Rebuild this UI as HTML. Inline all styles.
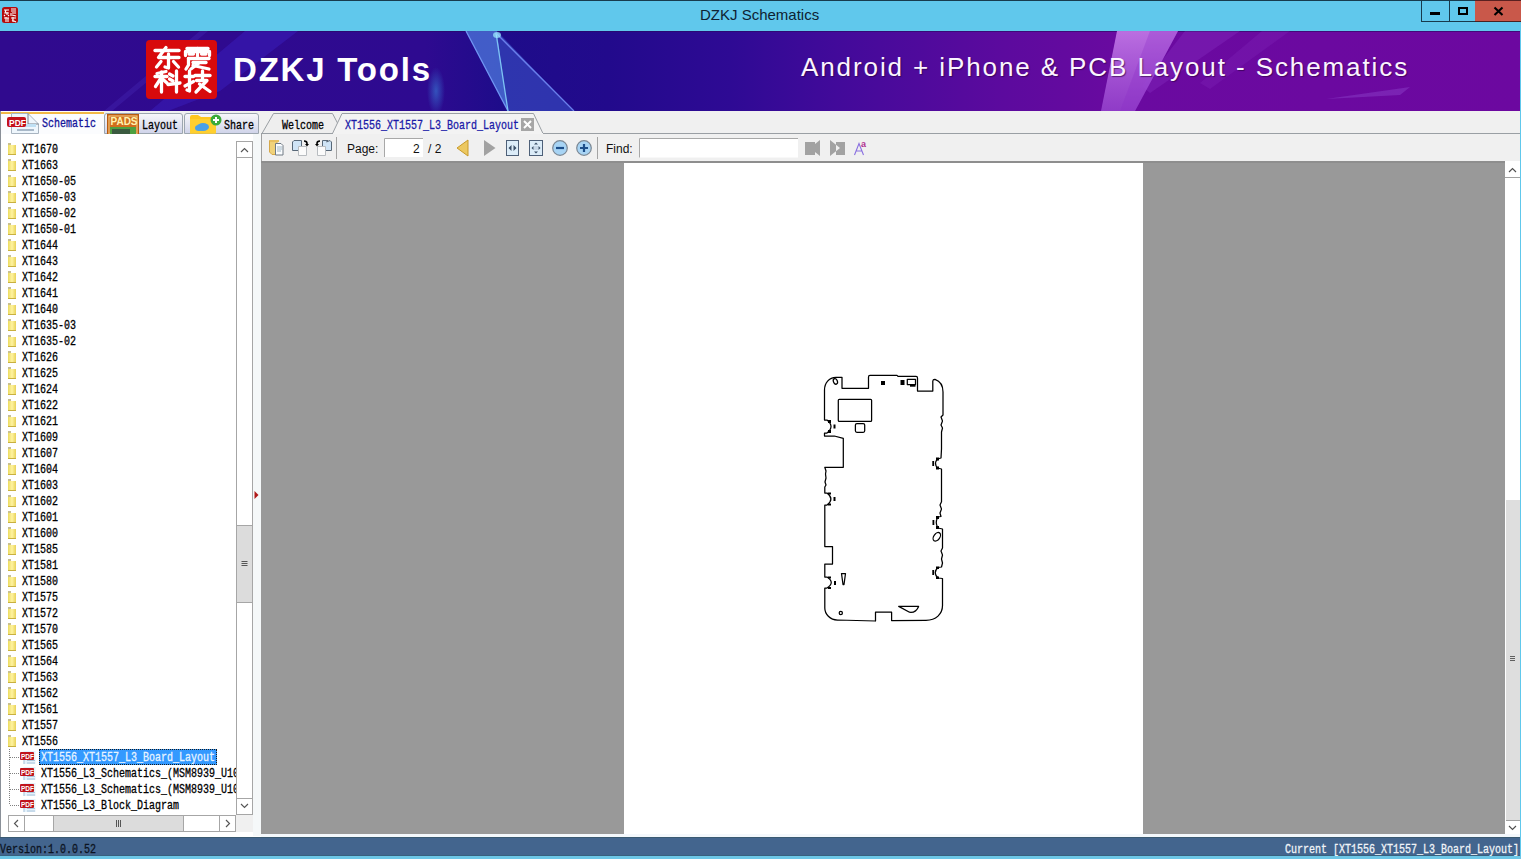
<!DOCTYPE html>
<html><head><meta charset="utf-8">
<style>
*{box-sizing:border-box;margin:0;padding:0}
html,body{width:1521px;height:859px;overflow:hidden;background:#f0f0f0;position:relative;font-family:"Liberation Sans",sans-serif}
.a{position:absolute}
.mono{font-family:"Liberation Mono",monospace;font-size:12.3px;line-height:14px;white-space:nowrap;transform-origin:0 0;transform:scaleX(0.813);-webkit-text-stroke:0.3px currentColor}
#title{left:0;top:0;width:1521px;height:31px;background:#60c8ec;border-top:1px solid #173c4e}
#ttext{left:700px;top:6px;font-size:15px;line-height:17px;color:#0e2233;white-space:nowrap}
.wb{top:0;height:22px;border:1px solid #183a4c;border-top:none}
#rb{left:1520px;top:0;width:1px;height:859px;background:#60c8ec}
#banner{left:0;top:31px;width:1520px;height:80px;overflow:hidden;background:linear-gradient(90deg,#2e0a8e 0%,#2c0b8c 30%,#1e0c88 34%,#2a0a90 45%,#3c0a98 53%,#5a0a9e 62%,#6a0aa0 75%,#6c08a0 100%)}
#tabs{left:0;top:111px;width:1520px;height:23px;background:#f0f0f0}
#tree{left:0;top:134px;width:261px;height:703px;background:#fff;border-left:1px solid #8a9098}
.row{position:absolute;left:0;height:16px;width:240px}
.fold{position:absolute;left:8px;top:4px;width:8px;height:10px;background:linear-gradient(90deg,#ecdc60,#fff3a0 50%,#e8d258);border-bottom:1px solid #c8b040}
.fold:before{content:"";position:absolute;left:0;top:-2px;width:3px;height:2px;background:#c8c090}
.rt{position:absolute;left:22px;top:2px;color:#000}
#view{left:261px;top:161px;width:1244px;height:673px;background:#999999;border-top:2px solid #8e8e8e}
#page{left:624px;top:163px;width:519px;height:671px;background:#fff}
#vs{left:1505px;top:161px;width:15px;height:673px;background:#fff}
#status{left:0;top:837px;width:1520px;height:19px;background:#43658e;border-top:1px solid #3a5a72;border-bottom:1px solid #38607e}
#bb{left:0;top:856px;width:1521px;height:3px;background:#6cc6e6}
</style></head><body>

<!-- title bar -->
<div id="title" class="a"></div>
<div id="rb" class="a"></div>
<svg class="a" style="left:2px;top:7px" width="17" height="17">
 <rect x="0" y="0" width="16" height="16" rx="2.5" fill="#b40c0c"/>
 <g stroke="#fff" stroke-width="1.1" fill="none">
  <path d="M2 3 H7 M4 3 L3 6 H7 M5 5 V8 M3 8 L2 9 M6 8 L7 9"/>
  <path d="M9 2 H14 M9 4 H14 M9 6 V9 M10 6 H14 M10 8 L14 9"/>
  <path d="M2 11 H7 M4 10 V15 M6 11 V15"/>
  <path d="M9 11 H14 M11 10 V15 M10 13 L14 15"/>
 </g>
</svg>
<div id="ttext" class="a">DZKJ Schematics</div>
<div class="a wb" style="left:1421px;width:29px"></div>
<div class="a" style="left:1430px;top:12px;width:10px;height:3px;background:#000"></div>
<div class="a wb" style="left:1449px;width:27px;border-left:none"></div>
<div class="a" style="left:1458px;top:7px;width:10px;height:8px;border:2px solid #000"></div>
<div class="a" style="left:1475px;top:0;width:46px;height:22px;background:#c9584a;border-bottom:1px solid #4a2020;border-top:1px solid #5a2020"></div>
<svg class="a" style="left:1493px;top:6px" width="12" height="11"><path d="M1.5 1.5 L9.5 9 M9.5 1.5 L1.5 9" stroke="#000" stroke-width="2.1"/></svg>

<!-- banner -->
<svg class="a" style="left:0;top:31px" width="1520" height="80">
 <defs>
  <linearGradient id="bg" x1="0" x2="1520" y1="0" y2="0" gradientUnits="userSpaceOnUse">
   <stop offset="0" stop-color="#300a8e"/>
   <stop offset="0.28" stop-color="#2e0a90"/>
   <stop offset="0.33" stop-color="#1e0c8a"/>
   <stop offset="0.40" stop-color="#220a8c"/>
   <stop offset="0.48" stop-color="#2e0a94"/>
   <stop offset="0.55" stop-color="#420a9a"/>
   <stop offset="0.66" stop-color="#5c0a9e"/>
   <stop offset="0.74" stop-color="#6a0aa0"/>
   <stop offset="1" stop-color="#6c08a0"/>
  </linearGradient>
  <radialGradient id="glow" cx="0.5" cy="0.5" r="0.5">
   <stop offset="0" stop-color="#3a8ae0" stop-opacity="0.8"/>
   <stop offset="1" stop-color="#3a8ae0" stop-opacity="0"/>
  </radialGradient>
  <linearGradient id="tri" x1="0" y1="0" x2="0" y2="1">
   <stop offset="0" stop-color="#4a6ad8" stop-opacity="0.75"/>
   <stop offset="1" stop-color="#3a5ad0" stop-opacity="0.45"/>
  </linearGradient>
 </defs>
 <rect width="1520" height="80" fill="url(#bg)"/>
 <rect width="1520" height="1" fill="#2a0860" opacity="0.6"/>
  <!-- faint streaks left -->
 <path d="M200 0 L208 0 L112 80 L104 80 Z" fill="#5a40d8" opacity="0.2"/>
 <path d="M245 0 L298 0 L220 60 L168 80 L150 80 Z" fill="#4028d0" opacity="0.35"/>
<!-- blue triangle -->
 <path d="M466 0 L497 0 L508 80 Z" fill="#4e78dc" opacity="0.75"/>
 <path d="M497 0 L574 80 L508 80 Z" fill="#3c58cc" opacity="0.55"/>
 <path d="M466 0 L508 80" stroke="#7096f4" stroke-width="1.3"/>
 <path d="M496 2 L508 80" stroke="#7ec4f4" stroke-width="1.3"/>
 <path d="M496 2 L574 80" stroke="#6a80ec" stroke-width="1.3"/>
 <ellipse cx="497" cy="4" rx="4" ry="3" fill="#a0f0ff" opacity="0.7"/>
 <ellipse cx="436" cy="60" rx="9" ry="24" fill="url(#glow)" opacity="0.7"/>
 <!-- right pink streaks -->
 <defs>
  <linearGradient id="pk" x1="0" y1="0" x2="0" y2="1">
   <stop offset="0" stop-color="#c47ae8" stop-opacity="0.9"/>
   <stop offset="1" stop-color="#a050d8" stop-opacity="0.7"/>
  </linearGradient>
 </defs>
 <path d="M1117 0 L1178 0 L1135 80 L1101 80 Z" fill="url(#pk)"/>
 <path d="M1150 0 L1178 0 L1135 80 L1120 80 Z" fill="#8a30c8" opacity="0.3"/>
 <path d="M1185 0 L1240 0 L1150 62 L1142 55 Z" fill="#9a48d8" opacity="0.22"/>
 <path d="M1262 0 L1290 0 L1210 58 L1200 52 Z" fill="#9a48d8" opacity="0.15"/>
 <path d="M1326 68 L1410 56 L1400 64 Z" fill="#a060e0" opacity="0.3"/>
<!-- logo -->
 <rect x="146" y="9" width="71" height="59" rx="4" fill="#d80a0c"/>
 <g stroke="#fff" stroke-width="3.3" fill="none" stroke-linecap="round" stroke-linejoin="round">
  <path d="M155,19.5 L179,19.5"/>
  <path d="M166,16.5 L158.5,26.5 L179,26.5"/>
  <path d="M168.5,23 L168.5,37 L165,36"/>
  <path d="M161,30.5 L156.5,36"/>
  <path d="M173.5,30.5 L178.5,36"/>
  <path d="M187,17.5 L208,17.5"/>
  <path d="M185.5,24.5 L185.5,20.5 L209.5,20.5 L209.5,24.5"/>
  <path d="M197.5,17.5 L197.5,25"/>
  <path d="M189,23 L193.5,23"/>
  <path d="M201.5,23 L206,23"/>
  <path d="M188.5,27.5 L209,27.5"/>
  <path d="M188.5,27.5 L188.5,34 L186,38"/>
  <path d="M193,31.5 L206,31.5"/>
  <path d="M193,34.5 L209,38"/>
  <path d="M199,32 L191,38"/>
  <path d="M157,42.5 L166,40.5"/>
  <path d="M155,45.5 L167,45.5"/>
  <path d="M161.5,41 L161.5,61"/>
  <path d="M161,47 L155.5,55.5"/>
  <path d="M162.5,48 L167,52"/>
  <path d="M169.5,43 L173,45"/>
  <path d="M169.5,48 L173,50"/>
  <path d="M168,53.5 L180,52"/>
  <path d="M176.5,40 L176.5,61"/>
  <path d="M185,45.5 L193.5,45.5"/>
  <path d="M189.5,40 L189.5,60 L187,59"/>
  <path d="M185,55 L193.5,50.5"/>
  <path d="M195,44.5 L210,44.5"/>
  <path d="M202.5,40 L202.5,48"/>
  <path d="M196.5,49.5 L207,49.5 L196,61"/>
  <path d="M199.5,53 L210,60.5"/>
 </g>
 <text x="233" y="49.5" font-family="Liberation Sans" font-weight="bold" font-size="33" fill="#fff" letter-spacing="1.8">DZKJ Tools</text>
 <text x="801" y="44.7" font-family="Liberation Sans" font-size="26" fill="#fbf4ff" letter-spacing="1.9" style="text-shadow:1px 1px 1px rgba(40,0,60,.6)">Android + iPhone &amp; PCB Layout - Schematics</text>
</svg>

<!-- tabs strip -->
<div id="tabs" class="a"></div>

<!-- Schematic tab selected -->
<div class="a" style="left:0;top:111px;width:104px;height:23px;background:#fbfcfe;border-left:1px solid #8a9098"></div>
<div class="a" style="left:1px;top:112px;width:103px;height:2px;background:#f2b846"></div>
<svg class="a" style="left:0;top:111px" width="104" height="23">
 <path d="M11.5 2.5 H28 L38.5 13 V22.5 H11.5 Z" fill="#eef6fc" stroke="#a8b4c0"/>
 <path d="M28 2.5 V13 H38.5" fill="none" stroke="#5a6470" stroke-width="0.8"/>
 <rect x="16" y="13" width="20" height="3" fill="#bfe0f4"/>
 <rect x="17" y="18" width="17" height="2" fill="#a8b8c8"/>
 <rect x="7" y="6" width="19" height="10" rx="2" fill="#c4101a"/>
 <text x="9" y="14.5" font-family="Liberation Sans" font-size="8.5" font-weight="bold" fill="#fff">PDF</text>
</svg>
<div class="a mono" style="left:42px;top:117px;color:#14149a">Schematic</div>

<!-- Layout tab -->
<div class="a" style="left:104px;top:113px;width:79px;height:21px;border:1px solid #9ca6b0;border-radius:3px 3px 0 0;background:linear-gradient(#f6f6fa,#e4e6f2 50%,#d0d4ea)"></div>
<svg class="a" style="left:107px;top:114px" width="32" height="20">
 <rect x="0.5" y="0.5" width="31" height="19.5" fill="#d06e1c" stroke="#b85a10"/>
 <rect x="2" y="2" width="28" height="18" fill="none" stroke="#f8e0a0" stroke-width="0.8"/>
 <text x="3.5" y="11" font-family="Liberation Sans" font-size="10" font-weight="bold" fill="#fff4b0">PADS</text>
 <rect x="3" y="13" width="26" height="7" fill="#4ea040"/>
 <rect x="5" y="15" width="18" height="5" fill="#3a5a40"/>
</svg>
<div class="a mono" style="left:142px;top:119px;color:#000">Layout</div>

<!-- Share tab -->
<div class="a" style="left:184px;top:113px;width:75px;height:21px;border:1px solid #9ca6b0;border-radius:3px 3px 0 0;background:linear-gradient(#f6f6fa,#e4e6f2 50%,#d0d4ea)"></div>
<svg class="a" style="left:189px;top:114px" width="34" height="20">
 <path d="M1 3 Q1 1 3 1 H9 L12 3 H26 V19.5 H1 Z" fill="#ffc61e"/>
 <path d="M1 5 H27 V19.5 H1 Z" fill="#ffcf2e"/>
 <ellipse cx="14" cy="13" rx="6" ry="4" fill="#4aa0e6"/>
 <ellipse cx="10" cy="14" rx="4" ry="3" fill="#4aa0e6"/>
 <circle cx="27" cy="6" r="5.5" fill="#3aaa3a"/>
 <path d="M27 3 V9 M24 6 H30" stroke="#fff" stroke-width="2"/>
</svg>
<div class="a mono" style="left:224px;top:119px;color:#000">Share</div>

<!-- document tabs -->
<svg class="a" style="left:255px;top:111px" width="300" height="24">
 <path d="M7 22.5 L18.5 2.5 H77.5 L88 22.5 Z" fill="#eeeeee" stroke="#9a9fa4"/>
 <path d="M77.5 22.5 L87 2.5 H278.5 L288 22.5" fill="#f3f3f3" stroke="#9a9fa4"/>
 <path d="M78 23 H288" stroke="#f3f3f3" stroke-width="1.5"/>
 <rect x="266" y="7" width="13" height="13" fill="#a6a6a6"/>
 <path d="M269 10 L276 17 M276 10 L269 17" stroke="#fff" stroke-width="2"/>
</svg>
<div class="a mono" style="left:282px;top:119px;color:#000">Welcome</div>
<div class="a mono" style="left:345px;top:119px;color:#1a1aa8">XT1556_XT1557_L3_Board_Layout</div>


<!-- tree -->
<div id="tree" class="a"></div>
<svg class="a" style="left:0;top:134px" width="261" height="702">
 <rect x="253" y="0" width="8" height="702" fill="#f5f8f9"/>
 <path d="M254.5 357 L258.5 361 L254.5 365 Z" fill="#b01818"/>
 <!-- vscroll -->
 <rect x="236.5" y="7.5" width="16" height="673" fill="#fff" stroke="#a6a6a6"/>
 <path d="M236.5 23.5 H252.5" stroke="#a6a6a6"/>
 <path d="M241 18 L244.5 14.5 L248 18" fill="none" stroke="#555" stroke-width="1.15"/>
 <rect x="236.5" y="391.5" width="16" height="77" fill="#dcdcdc" stroke="#a6a6a6"/>
 <path d="M241.5 427.5 H247.5 M241.5 429.5 H247.5 M241.5 431.5 H247.5" stroke="#555"/>
 <path d="M236.5 664.5 H252.5" stroke="#a6a6a6"/>
 <path d="M241 670 L244.5 673.5 L248 670" fill="none" stroke="#555" stroke-width="1.15"/>
 <!-- hscroll -->
 <rect x="236" y="681" width="17" height="17" fill="#f0f0f0"/>
 <rect x="8.5" y="681.5" width="227" height="16" fill="#fff" stroke="#a6a6a6"/>
 <path d="M24.5 681.5 V697.5 M219.5 681.5 V697.5" stroke="#a6a6a6"/>
 <rect x="53.5" y="681.5" width="130" height="16" fill="#dcdcdc" stroke="#a6a6a6"/>
 <path d="M116.5 686 V693 M118.5 686 V693 M120.5 686 V693" stroke="#555"/>
 <path d="M18 686 L14.5 689.5 L18 693" fill="none" stroke="#555" stroke-width="1.15"/>
 <path d="M226 686 L229.5 689.5 L226 693" fill="none" stroke="#555" stroke-width="1.15"/>
</svg>
<div class="row" style="top:141px"><div class="fold"></div><div class="rt mono">XT1670</div></div>
<div class="row" style="top:157px"><div class="fold"></div><div class="rt mono">XT1663</div></div>
<div class="row" style="top:173px"><div class="fold"></div><div class="rt mono">XT1650-05</div></div>
<div class="row" style="top:189px"><div class="fold"></div><div class="rt mono">XT1650-03</div></div>
<div class="row" style="top:205px"><div class="fold"></div><div class="rt mono">XT1650-02</div></div>
<div class="row" style="top:221px"><div class="fold"></div><div class="rt mono">XT1650-01</div></div>
<div class="row" style="top:237px"><div class="fold"></div><div class="rt mono">XT1644</div></div>
<div class="row" style="top:253px"><div class="fold"></div><div class="rt mono">XT1643</div></div>
<div class="row" style="top:269px"><div class="fold"></div><div class="rt mono">XT1642</div></div>
<div class="row" style="top:285px"><div class="fold"></div><div class="rt mono">XT1641</div></div>
<div class="row" style="top:301px"><div class="fold"></div><div class="rt mono">XT1640</div></div>
<div class="row" style="top:317px"><div class="fold"></div><div class="rt mono">XT1635-03</div></div>
<div class="row" style="top:333px"><div class="fold"></div><div class="rt mono">XT1635-02</div></div>
<div class="row" style="top:349px"><div class="fold"></div><div class="rt mono">XT1626</div></div>
<div class="row" style="top:365px"><div class="fold"></div><div class="rt mono">XT1625</div></div>
<div class="row" style="top:381px"><div class="fold"></div><div class="rt mono">XT1624</div></div>
<div class="row" style="top:397px"><div class="fold"></div><div class="rt mono">XT1622</div></div>
<div class="row" style="top:413px"><div class="fold"></div><div class="rt mono">XT1621</div></div>
<div class="row" style="top:429px"><div class="fold"></div><div class="rt mono">XT1609</div></div>
<div class="row" style="top:445px"><div class="fold"></div><div class="rt mono">XT1607</div></div>
<div class="row" style="top:461px"><div class="fold"></div><div class="rt mono">XT1604</div></div>
<div class="row" style="top:477px"><div class="fold"></div><div class="rt mono">XT1603</div></div>
<div class="row" style="top:493px"><div class="fold"></div><div class="rt mono">XT1602</div></div>
<div class="row" style="top:509px"><div class="fold"></div><div class="rt mono">XT1601</div></div>
<div class="row" style="top:525px"><div class="fold"></div><div class="rt mono">XT1600</div></div>
<div class="row" style="top:541px"><div class="fold"></div><div class="rt mono">XT1585</div></div>
<div class="row" style="top:557px"><div class="fold"></div><div class="rt mono">XT1581</div></div>
<div class="row" style="top:573px"><div class="fold"></div><div class="rt mono">XT1580</div></div>
<div class="row" style="top:589px"><div class="fold"></div><div class="rt mono">XT1575</div></div>
<div class="row" style="top:605px"><div class="fold"></div><div class="rt mono">XT1572</div></div>
<div class="row" style="top:621px"><div class="fold"></div><div class="rt mono">XT1570</div></div>
<div class="row" style="top:637px"><div class="fold"></div><div class="rt mono">XT1565</div></div>
<div class="row" style="top:653px"><div class="fold"></div><div class="rt mono">XT1564</div></div>
<div class="row" style="top:669px"><div class="fold"></div><div class="rt mono">XT1563</div></div>
<div class="row" style="top:685px"><div class="fold"></div><div class="rt mono">XT1562</div></div>
<div class="row" style="top:701px"><div class="fold"></div><div class="rt mono">XT1561</div></div>
<div class="row" style="top:717px"><div class="fold"></div><div class="rt mono">XT1557</div></div>
<div class="row" style="top:733px"><div class="fold"></div><div class="rt mono">XT1556</div></div>
<svg class="a" style="left:0;top:741px" width="40" height="72">
 <path d="M9.5 8 V64" stroke="#808080" stroke-dasharray="1 1"/>
 <path d="M10 16.5 H20 M10 32.5 H20 M10 48.5 H20 M10 64.5 H20" stroke="#808080" stroke-dasharray="1 1"/>
 <g id="pdfic">
 <rect x="23.5" y="10" width="12" height="13" fill="#e4f2fc"/>
 <path d="M24 12 V23 M27 19.5 H35 M27 22 H35" stroke="#9ab8d0" stroke-width="0.8"/>
 <rect x="20" y="11" width="14" height="8" rx="1" fill="#c0141c"/>
 <text x="21" y="17.6" font-family="Liberation Sans" font-size="6.5" font-weight="bold" fill="#fff">PDF</text>
 </g>
 <use href="#pdfic" y="16"/>
 <use href="#pdfic" y="32"/>
 <use href="#pdfic" y="48"/>
</svg>
<div class="a" style="left:39px;top:749px;width:178px;height:16px;background:#3399ff;border:1px dotted #1a1a1a"></div>
<div class="row" style="top:749px;width:236px;overflow:hidden"><div class="pdfi"></div><div class="rt mono" style="left:41px;color:#e8f4ff">XT1556_XT1557_L3_Board_Layout</div></div>
<div class="row" style="top:765px;width:236px;overflow:hidden"><div class="pdfi"></div><div class="rt mono" style="left:41px">XT1556_L3_Schematics_(MSM8939_U10</div></div>
<div class="row" style="top:781px;width:236px;overflow:hidden"><div class="pdfi"></div><div class="rt mono" style="left:41px">XT1556_L3_Schematics_(MSM8939_U10</div></div>
<div class="row" style="top:797px;width:236px;overflow:hidden"><div class="pdfi"></div><div class="rt mono" style="left:41px">XT1556_L3_Block_Diagram</div></div>

<!-- toolbar -->
<div class="a" style="left:261px;top:133px;width:1259px;height:28px;background:#f0f0f0;border-left:1px solid #a0a0a0"></div>
<div class="a" style="left:261px;top:133px;width:72px;height:1px;background:#9a9fa4"></div>
<div class="a" style="left:543px;top:133px;width:977px;height:1px;background:#9a9fa4"></div>
<div class="a" style="left:333px;top:133px;width:210px;height:1px;background:#f3f3f3"></div>
<svg class="a" style="left:262px;top:134px" width="620" height="27">
 <!-- icon1 folder doc -->
 <path d="M7.5 6.5 H15 V20.5 H10 L7.5 18 Z" fill="#f0d27a" stroke="#d6a84a"/>
 <path d="M8 6 H17 V8 H8Z" fill="#e8c060"/>
 <path d="M13.5 9.5 H19 L21 11.5 V21 H13.5 Z" fill="#fafcfe" stroke="#707a84"/>
 <path d="M15 13 H20 M15 15 H20 M15 17 H19" stroke="#8aa6b8" stroke-width="0.8"/>
 <!-- icon2 -->
 <path d="M30.5 8 L32 6.5 H39.5 V16.5 H30.5 Z" fill="#cfe4f6" stroke="#586878"/>
 <path d="M36.5 12.5 H44.5 V21.5 H36.5 Z" fill="#fbfbfb" stroke="#b8bcc0"/>
 <path d="M42 7 Q45 7 45 9.5 V11" fill="none" stroke="#000" stroke-width="1.6"/>
 <path d="M43 10 H47 L45 12.5 Z" fill="#000"/>
 <!-- icon3 -->
 <path d="M64.5 8 L66 6.5 H60.5 V16.5 H69.5 V8 L68 6.5 Z" fill="#cfe4f6" stroke="#586878"/>
 <path d="M63.5 12.5 H55.5 V21.5 H63.5 Z" fill="#fbfbfb" stroke="#b8bcc0"/>
 <path d="M58 7 Q55 7 55 9.5 V11" fill="none" stroke="#000" stroke-width="1.6"/>
 <path d="M53 10 H57 L55 12.5 Z" fill="#000"/>
 <!-- sep -->
 <path d="M74.5 3 V25" stroke="#a4a4a4"/>
 <!-- input -->
 <rect x="122" y="4" width="39" height="19" fill="#fff"/>
 <path d="M122.5 23 V4.5 H161" stroke="#a8a8a8" fill="none"/>
 <!-- prev gold -->
 <path d="M206 6 V22 L195 14 Z" fill="#ecc860" stroke="#c89a2a" stroke-linejoin="round"/>
 <!-- next gray -->
 <path d="M222 6 V22 L233.5 14 Z" fill="#a2a2a2"/>
 <!-- fit width -->
 <rect x="244.5" y="6.5" width="12" height="15" fill="#dcecf8" stroke="#4e6078"/>
 <path d="M249.5 11 V17 L246.5 14 Z M251.5 11 V17 L254.5 14 Z" fill="#3a4e66"/>
 <!-- fit page -->
 <rect x="267.5" y="6.5" width="13" height="15" fill="#dcecf8" stroke="#4e6078"/>
 <path d="M274 8.5 L272 10.5 H276 Z M274 19.5 L272 17.5 H276 Z M269.5 14 L271.5 12 V16 Z M278.5 14 L276.5 12 V16 Z" fill="#3a4e66"/>
 <rect x="272" y="12" width="4" height="4" fill="#c8d8e8"/>
 <!-- zoom out -->
 <circle cx="298" cy="14" r="7.3" fill="#a8d4f4" stroke="#7c8894" stroke-width="1.2"/>
 <path d="M294 14 H302" stroke="#1c4e8a" stroke-width="2.2"/>
 <!-- zoom in -->
 <circle cx="322" cy="14" r="7.3" fill="#a8d4f4" stroke="#7c8894" stroke-width="1.2"/>
 <path d="M318 14 H326 M322 10 V18" stroke="#1c4e8a" stroke-width="2.2"/>
 <!-- sep -->
 <path d="M335.5 3 V25" stroke="#a4a4a4"/>
 <!-- find input -->
 <rect x="377" y="4" width="159" height="19.5" fill="#fff"/>
 <path d="M377.5 23.5 V4.5 H536" stroke="#a8a8a8" fill="none"/>
 <!-- find prev -->
 <path d="M543 8 H553 V21 H543 Z M558 6 V22 L548 14 Z" fill="#a2a2a2"/>
 <!-- find next -->
 <path d="M574 8 H583 V21 H574 Z M568 6 V22 L578 14 Z" fill="#a2a2a2"/>
 <!-- Aa -->
 <path d="M592.5 21 L597 9.5 L601.5 21 M594.5 17 H599.5" fill="none" stroke="#8a70e0" stroke-width="1.1"/>
 <text x="599" y="13" font-family="Liberation Sans" font-size="9" font-weight="bold" fill="#b03090">a</text>
</svg>
<div class="a" style="left:347px;top:142px;font-size:12px;line-height:14px;color:#101010">Page:</div>
<div class="a" style="left:413px;top:142px;font-size:12px;line-height:14px;color:#101010">2</div>
<div class="a" style="left:428px;top:142px;font-size:12px;line-height:14px;color:#101010">/ 2</div>
<div class="a" style="left:606px;top:142px;font-size:12px;line-height:14px;color:#101010">Find:</div>


<!-- view -->
<div id="view" class="a"></div>
<div id="page" class="a"></div>
<svg class="a" style="left:780px;top:360px" width="180" height="280" viewBox="780 360 180 280">
 <g fill="none" stroke="#000" stroke-width="1.25" stroke-linejoin="round">
 <path d="M824.5 390 C824.5 383 829 377.5 836 377.3 L842 377.3 V388.3 H868.5 V377 Q868.5 375.3 870 375.3 H897 L898 376.4 H916 Q917.5 376.4 917.5 378 V391 H932.8 V381 Q933 379.2 935 379.3 C940 381 943 386 943 392 V415 L941 417 L942.5 421 L941 425 L942.5 428 L941.5 432 V449 L941 458 L937.5 459 Q933.5 463.5 937.5 468 L941.5 469 V501.7 L940 505 L941.5 509 L940 513 L941 516.5 L938 517 Q934.5 522.5 938 528 L942.5 529 V548 L941 551 L942.5 555 L941.5 559 L942.5 563 L941.5 567 L938 567.5 Q932.5 572.5 938 578 L942.5 578.5 V605.6 C942.5 614 936 620.3 926 620.3 L891.6 620.6 V612.2 H875.5 V621 L837.5 620 C830 620 824.8 614 824.8 608 V588 L827 588 Q835.5 582.5 827 577 L824.8 577 V564 H832.5 V546.5 H824.8 V505 L827 505 Q834.8 499 827 493 L824.8 493 L824.8 487 L826 485 L825 482 L826 478 L825.5 474 L826 471 L824.8 467.3 H843.3 V438.3 L834.3 436 H824.5 V433 L827 433 Q835 426.5 827 420 L824.5 420 Z"/>
 <ellipse cx="835.4" cy="381.4" rx="2" ry="2.9" transform="rotate(-20 835.4 381.4)"/>
 <rect x="838.3" y="399.3" width="33.3" height="22.1" rx="1"/>
 <rect x="855.4" y="423.5" width="9.3" height="8.8" rx="1.5"/>
 <rect x="907.3" y="379.3" width="8.2" height="5.2"/>
 <ellipse cx="936.8" cy="536.8" rx="3" ry="4.8" transform="rotate(35 936.8 536.8)"/>
 <path d="M841.5 573.5 H845.5 L844 584.5 H843 Z"/>
 <circle cx="840.8" cy="613" r="1.6"/>
 <path d="M898.7 606.4 H918.6 Q916 613 909.5 612.2 Z"/>
 </g>
 <g fill="#000">
  <rect x="881" y="381" width="4" height="4"/>
  <rect x="900.5" y="380" width="4" height="5"/>
  <rect x="910" y="384.3" width="5.5" height="2.4"/>
  <rect x="828" y="420" width="3" height="3"/><rect x="828" y="430" width="3" height="3"/><rect x="833.5" y="424.5" width="2" height="4"/>
  <rect x="828" y="492.5" width="3" height="2"/><rect x="828" y="503.5" width="3" height="2"/><rect x="833.5" y="497" width="2" height="4"/>
  <rect x="828" y="576.5" width="3" height="2"/><rect x="828" y="587" width="3" height="2"/><rect x="834" y="581" width="2" height="4"/>
  <rect x="936" y="457.5" width="3" height="3"/><rect x="936" y="466.5" width="3" height="3"/><rect x="932.3" y="461" width="1.8" height="5"/>
  <rect x="936" y="516" width="3" height="3"/><rect x="936" y="526" width="3" height="3"/><rect x="932.5" y="520" width="1.8" height="5"/>
  <rect x="936" y="566.5" width="3" height="2.5"/><rect x="936" y="576.5" width="3" height="2.5"/><rect x="932.3" y="570" width="1.8" height="5"/>
 </g>
</svg>
<div id="vs" class="a"></div>
<svg class="a" style="left:1505px;top:161px" width="15" height="673">
 <rect x="0" y="0" width="15" height="673" fill="#fff"/>
 <path d="M0 16.5 H15" stroke="#a0a0a0"/>
 <path d="M4 11 L7.5 7.5 L11 11" fill="none" stroke="#505050" stroke-width="1.15"/>
 <rect x="1" y="339" width="14" height="320" fill="#dedede"/>
 <path d="M1 659.5 H15" stroke="#a0a0a0"/>
 <path d="M4 665 L7.5 668.5 L11 665" fill="none" stroke="#505050" stroke-width="1.15"/>
 <path d="M5 495.5 H10 M5 497.5 H10 M5 499.5 H10" stroke="#606060"/>
</svg>
<div class="a" style="left:261px;top:834px;width:1259px;height:3px;background:#f4f8fc"></div>

<!-- status -->
<div id="status" class="a"></div>
<div class="a mono" style="left:0;top:843px;color:#0c1422">Version:1.0.0.52</div>
<div class="a mono" style="left:1285px;top:843px;color:#f0f4f8">Current [XT1556_XT1557_L3_Board_Layout]</div>
<div id="bb" class="a"></div>

</body></html>
